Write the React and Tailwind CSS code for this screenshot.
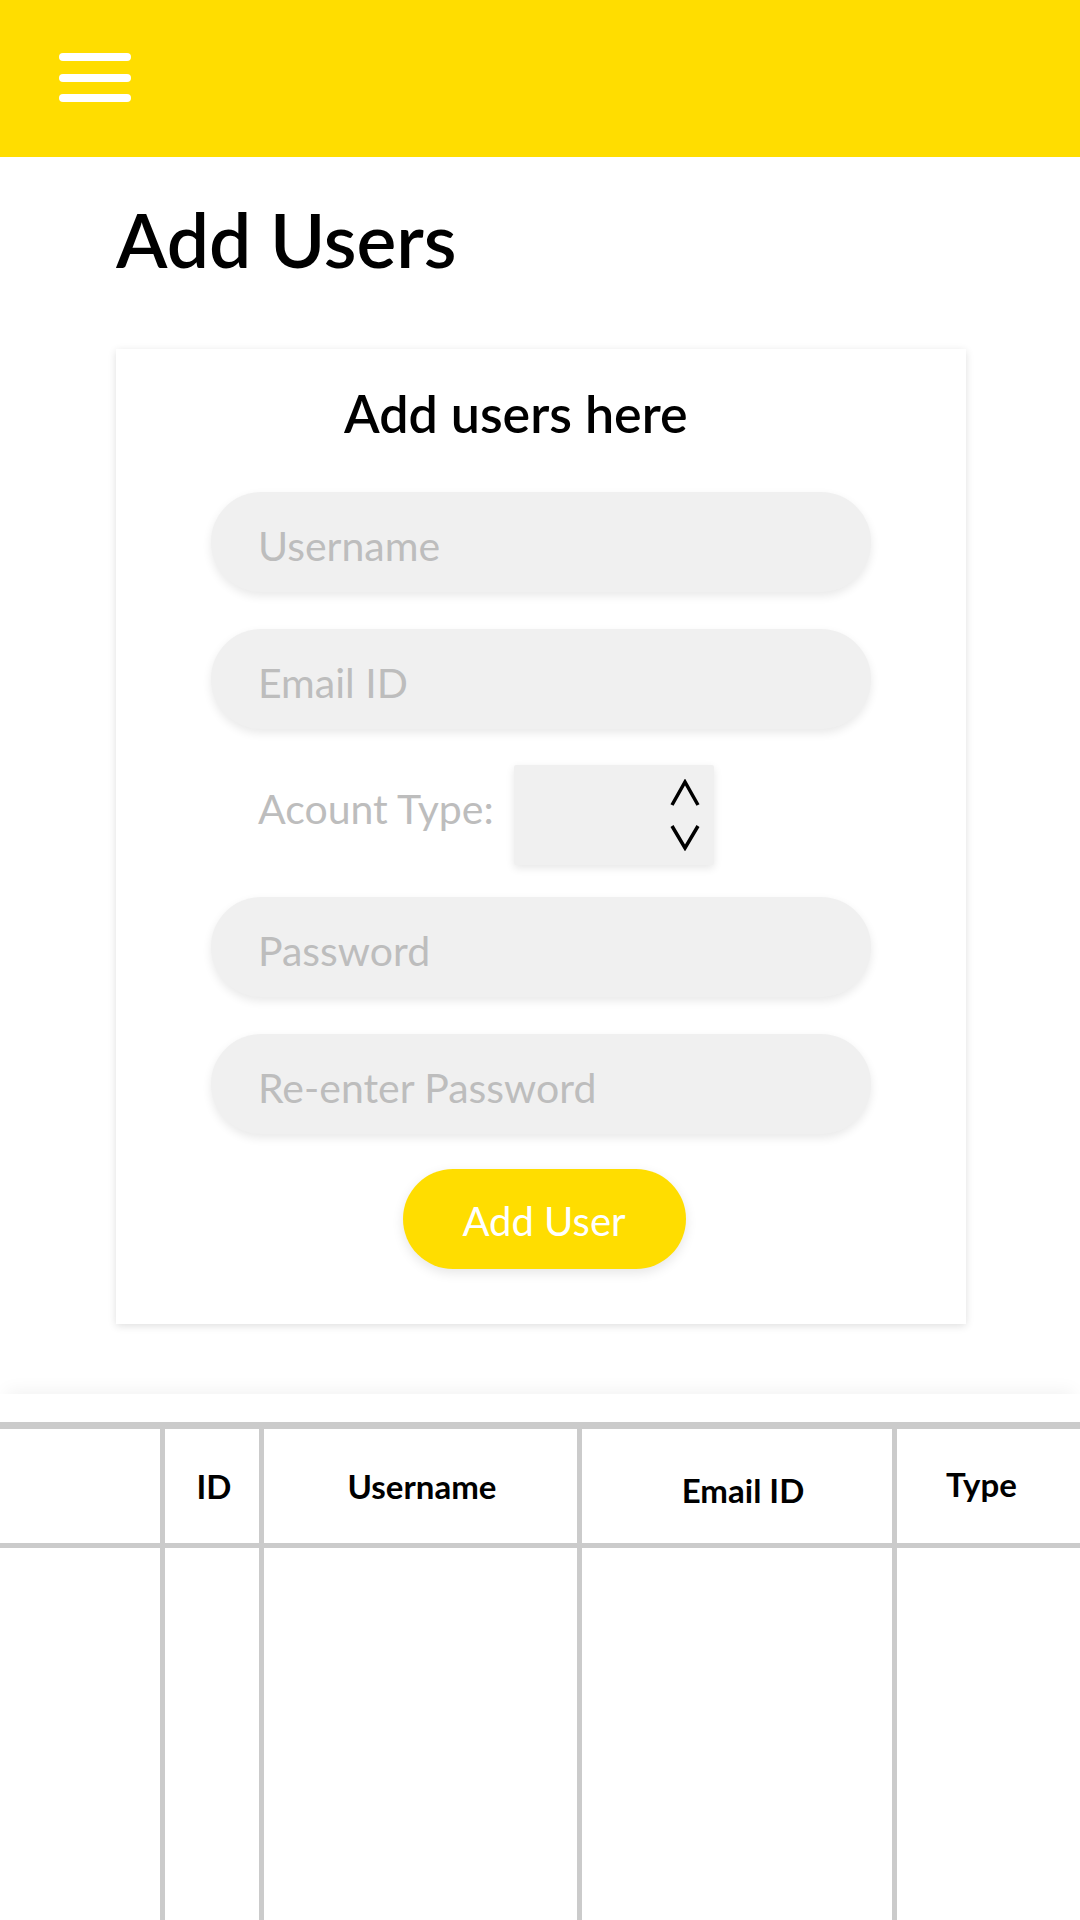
import { useState } from 'react';

const font = { fontFamily: 'Lato, "Open Sans", sans-serif' };

function Field({ placeholder, type = 'text', className = '' }) {
  return (
    <input
      type={type}
      placeholder={placeholder}
      className={`block w-[660px] h-[100px] mx-auto rounded-full bg-[#f0f0f0] pl-[47px] pt-[6px] text-[41px] leading-none text-[#555] placeholder:text-[#bdbdbd] outline-none shadow-[0_4px_10px_rgba(0,0,0,0.09)] ${className}`}
    />
  );
}

function Chevrons() {
  return (
    <svg width="30" height="72" viewBox="0 0 30 72" fill="none" stroke="#000" strokeWidth="3.5">
      <polyline points="2,26 15,3 28,26" />
      <polyline points="2,47 15,69 28,47" />
    </svg>
  );
}

export default function App() {
  const [users] = useState([]);

  return (
    <div className="min-h-[1920px] bg-white overflow-hidden" style={font}>
      <header className="h-[157px] bg-[#ffdd00] pl-[59px] pt-[53px]">
        <button className="flex flex-col gap-[12.5px]">
          <span className="block w-[72px] h-[8px] rounded-full bg-white" />
          <span className="block w-[72px] h-[8px] rounded-full bg-white" />
          <span className="block w-[72px] h-[8px] rounded-full bg-white" />
        </button>
      </header>

      <div className="w-[850px] ml-[116px]">
        <h1 className="mt-[45px] text-[75px] leading-none font-semibold text-black">Add Users</h1>

        <div className="mt-[72px] bg-white shadow-[0_2px_8px_rgba(0,0,0,0.13)] pt-[38px] pb-[55px]">
          <h2 className="pl-[228px] text-[52px] leading-none font-semibold text-black">Add users here</h2>

          <Field placeholder="Username" className="mt-[53px]" />
          <Field placeholder="Email ID" type="email" className="mt-[37px]" />

          <div className="w-[660px] mx-auto mt-[36px] flex items-center pl-[47px]">
            <span className="w-[256px] mb-[14px] text-[41px] leading-none text-[#bdbdbd]">Acount Type:</span>
            <div className="w-[200px] h-[100px] bg-[#f0f0f0] rounded-[2px] shadow-[0_3px_8px_rgba(0,0,0,0.1)] flex items-center justify-end pr-[14px]">
              <Chevrons />
            </div>
          </div>

          <Field placeholder="Password" type="password" className="mt-[32px]" />
          <Field placeholder="Re-enter Password" type="password" className="mt-[37px]" />

          <div className="mt-[35px] flex justify-center pl-[6px]">
            <button className="w-[283px] h-[100px] rounded-full bg-[#ffdd00] text-white text-[40px] leading-none pt-[4px] shadow-[0_4px_12px_rgba(0,0,0,0.1)]">
              Add User
            </button>
          </div>
        </div>
      </div>

      <section className="mt-[70px] pt-[28px] shadow-[0_-10px_16px_-6px_rgba(0,0,0,0.05)]">
        <div className="border-t-[7px] border-[#cbcbcb]">
          <div className="flex h-[119px] border-b-[5px] border-[#cbcbcb] text-[33px] font-bold text-black leading-none">
            <div className="w-[160px]" />
            <div className="w-[99px] border-l-[5px] border-[#cbcbcb] flex items-center justify-center pl-[4px]">ID</div>
            <div className="w-[318px] border-l-[5px] border-[#cbcbcb] flex items-center justify-center pl-[3px]">Username</div>
            <div className="w-[315px] border-l-[5px] border-[#cbcbcb] flex items-center justify-center pl-[12px] pt-[8px]">Email ID</div>
            <div className="flex-1 border-l-[5px] border-[#cbcbcb] flex items-center justify-center pr-[14px] pb-[4px]">Type</div>
          </div>
          <div className="flex h-[420px]">
            <div className="w-[160px]" />
            <div className="w-[99px] border-l-[5px] border-[#cbcbcb]" />
            <div className="w-[318px] border-l-[5px] border-[#cbcbcb]" />
            <div className="w-[315px] border-l-[5px] border-[#cbcbcb]" />
            <div className="flex-1 border-l-[5px] border-[#cbcbcb]">
              {users.map((u) => (
                <div key={u.id}>{u.type}</div>
              ))}
            </div>
          </div>
        </div>
      </section>
    </div>
  );
}
